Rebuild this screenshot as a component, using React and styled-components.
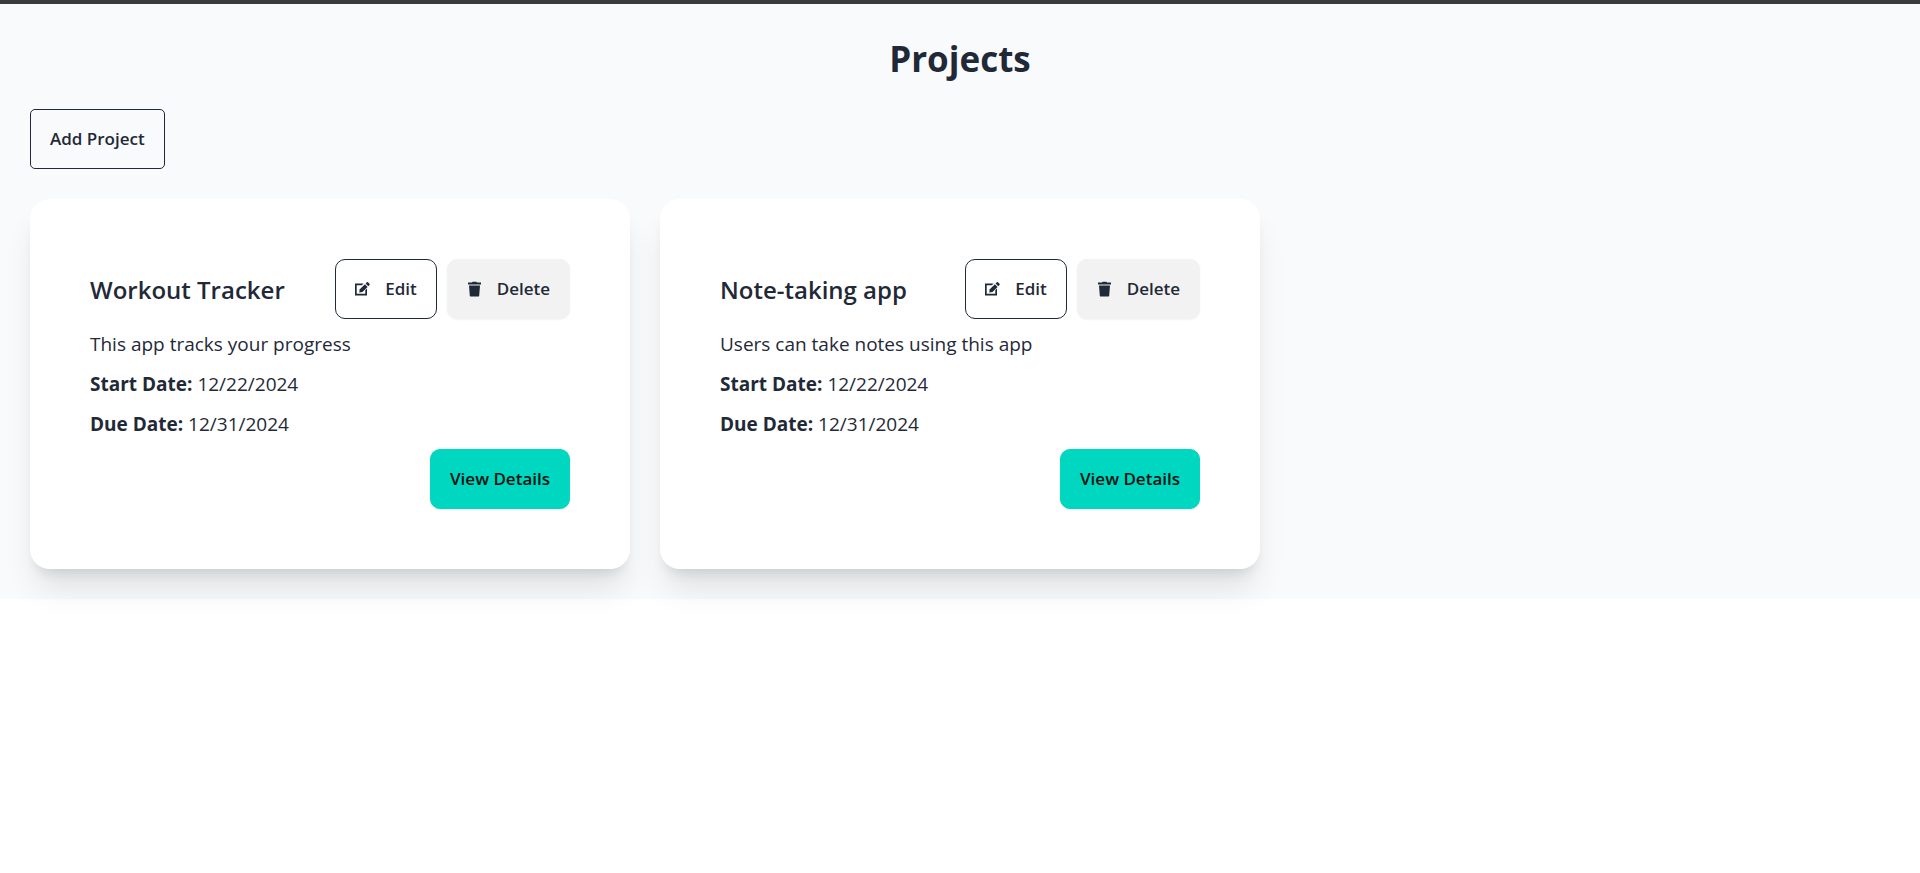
import React from "react";
import styled, { createGlobalStyle } from "styled-components";

const GlobalStyle = createGlobalStyle`
  *, *::before, *::after { box-sizing: border-box; }
  body {
    margin: 0;
    min-height: 100vh;
    background: #ffffff;
    color: #1f2937;
    font-family: "Segoe UI", "Open Sans", "Noto Sans", sans-serif;
    font-size: 19px;
    line-height: 30px;
  }
  h1, h2, p { margin: 0; }
`;

const Page = styled.main`
  border-top: 4px solid #3b3b3b;
  padding: 30px;
  background: #f9fafc;
`;

const Heading = styled.h1`
  font-size: 35px;
  line-height: 50px;
  font-weight: 700;
  text-align: center;
`;

const Toolbar = styled.div`
  display: flex;
  margin: 25px 0 30px;
`;

const variants = {
  outline: "background: transparent; border-color: #1f2937; color: #1f2937;",
  neutral:
    "background: #f2f2f2; border-color: #f2f2f2; color: #1f2937; box-shadow: 0 1px 2px rgba(0, 0, 0, 0.05);",
  accent:
    "background: #00d7c0; border-color: #00d7c0; color: #00110e; box-shadow: 0 1px 2px rgba(0, 0, 0, 0.05);",
};

const Button = styled.button`
  display: inline-flex;
  align-items: center;
  justify-content: center;
  gap: 15px;
  height: 60px;
  padding: 0 19px;
  border: 1px solid;
  border-radius: ${(p) => p.$radius || 10}px;
  font-family: inherit;
  font-size: 17px;
  line-height: 20px;
  font-weight: 600;
  white-space: nowrap;
  cursor: pointer;
  ${(p) => variants[p.$variant]}
`;

const Icon = styled.svg`
  display: block;
  width: 15px;
  height: 16px;
  fill: currentColor;
`;

const Grid = styled.div`
  display: grid;
  grid-template-columns: repeat(3, minmax(0, 1fr));
  gap: 30px;
`;

const Card = styled.article`
  display: flex;
  flex-direction: column;
  gap: 10px;
  padding: 60px;
  border-radius: 20px;
  background: #ffffff;
  box-shadow: 0 25px 32px -6px rgba(0, 0, 0, 0.1),
    0 10px 12px -6px rgba(0, 0, 0, 0.1);
`;

const CardHeader = styled.header`
  display: flex;
  align-items: center;
  justify-content: space-between;
`;

const CardTitle = styled.h2`
  padding-top: 2px;
  font-size: 24px;
  line-height: 36px;
  font-weight: 600;
`;

const Actions = styled.div`
  display: flex;
  gap: 10px;
`;

const CardFooter = styled.footer`
  display: flex;
  justify-content: flex-end;
`;

const EditIcon = () => (
  <Icon viewBox="0 0 15 16" aria-hidden="true">
    <path d="M0 2.5h8.6L6.8 4.2H1.7v8.6h8.6V9.2L12 7.5v7H0z" />
    <path d="M4.2 11.6l.6-3.3 5.1-5.1 2.7 2.7-5.1 5.1z" />
    <path d="M10.6 2.5l1.2-1.2q.6-.5 1.2 0l1.5 1.5q.5.6 0 1.2l-1.2 1.2z" />
  </Icon>
);

const TrashIcon = () => (
  <Icon viewBox="0 0 15 16" aria-hidden="true">
    <path d="M1 1.5h4L5.7.7h3.6l.7.8h4v1.9H1z" />
    <path d="M2 4.4h11l-.8 10q-.1 1.2-1.2 1.2H4q-1.1 0-1.2-1.2z" />
  </Icon>
);

const projects = [
  { name: "Workout Tracker", about: "This app tracks your progress", start: "12/22/2024", due: "12/31/2024" },
  { name: "Note-taking app", about: "Users can take notes using this app", start: "12/22/2024", due: "12/31/2024" },
];

function ProjectCard({ project }) {
  return (
    <Card>
      <CardHeader>
        <CardTitle>{project.name}</CardTitle>
        <Actions>
          <Button type="button" $variant="outline">
            <EditIcon />
            Edit
          </Button>
          <Button type="button" $variant="neutral">
            <TrashIcon />
            Delete
          </Button>
        </Actions>
      </CardHeader>
      <p>{project.about}</p>
      <p>
        <strong>Start Date:</strong> {project.start}
      </p>
      <p>
        <strong>Due Date:</strong> {project.due}
      </p>
      <CardFooter>
        <Button type="button" $variant="accent">View Details</Button>
      </CardFooter>
    </Card>
  );
}

export default function App() {
  return (
    <>
      <GlobalStyle />
      <Page>
        <Heading>Projects</Heading>
        <Toolbar>
          <Button type="button" $variant="outline" $radius={5}>Add Project</Button>
        </Toolbar>
        <Grid>
          {projects.map((project) => (
            <ProjectCard key={project.name} project={project} />
          ))}
        </Grid>
      </Page>
    </>
  );
}
